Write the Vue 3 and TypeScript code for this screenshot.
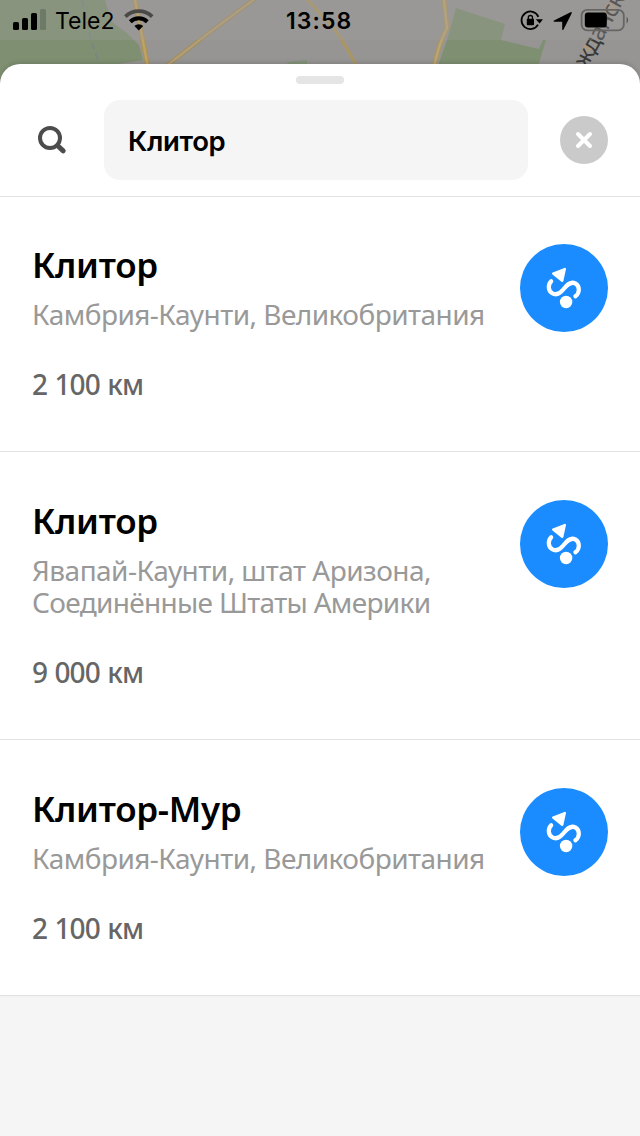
<script setup lang="ts">
import { ref } from 'vue'

interface Place {
  title: string
  address: string[]
  distance: string
}

const query = ref('Клитор')

const places: Place[] = [
  { title: 'Клитор', address: ['Камбрия-Каунти, Великобритания'], distance: '2 100 км' },
  { title: 'Клитор', address: ['Явапай-Каунти, штат Аризона,', 'Соединённые Штаты Америки'], distance: '9 000 км' },
  { title: 'Клитор-Мур', address: ['Камбрия-Каунти, Великобритания'], distance: '2 100 км' },
]
</script>

<template>
  <main class="screen">
    <svg class="map" width="640" height="90" viewBox="0 0 640 90">
      <rect width="640" height="90" fill="#969593" />
      <path d="M0 0H105L112 22L128 34L139 45L143 60L118 64L116 90H0Z" fill="#7f9072" />
      <path d="M456 8L505 24L501 40L539 49L543 40H546L538 66H438L447 40Z" fill="#7f9072" />
      <path d="M288 62L307 60V66H286Z" fill="#84957a" />
      <g fill="none">
        <path d="M82 0L91 40L101 68" stroke="#7c8581" stroke-width="2" stroke-dasharray="7 4" />
        <path d="M135 0L142 36L148 68" stroke="#aa935b" stroke-width="5" />
        <path d="M135 0L142 36L148 68" stroke="#bfa366" stroke-width="2.4" />
        <path d="M256 -2L210 32L165 67" stroke="#a28f62" stroke-width="4.5" />
        <path d="M256 -2L210 32L165 67" stroke="#b4a078" stroke-width="2" />
        <path d="M306 -2L335 30Q346 45 357 67" stroke="#aa9665" stroke-width="3.2" />
        <path d="M444 0L447 28Q439 43 434 67" stroke="#aa9665" stroke-width="5" />
        <path d="M444 0L447 28Q439 43 434 67" stroke="#baa475" stroke-width="2.4" />
      </g>
      <circle cx="587" cy="48" r="4" fill="#aa9780" />
      <circle cx="610" cy="8" r="5" fill="#aa9780" />
      <text class="street" transform="translate(586.5 69) rotate(-61)">жданск</text>
      <rect width="640" height="40" fill="#a1a09f" opacity=".3" />
    </svg>

    <header class="status">
      <svg class="signal" width="34" height="22" viewBox="0 0 34 22">
        <rect x="0" y="13" width="6" height="8" rx="1.5" />
        <rect x="9" y="9" width="6" height="12" rx="1.5" />
        <rect x="18" y="4" width="6" height="17" rx="1.5" />
        <rect x="27" y="0" width="6" height="21" rx="1.5" fill="#6e7a68" />
      </svg>
      <span class="carrier">Tele2</span>
      <svg class="wifi" width="30" height="22" viewBox="0 0 30 22" fill="none">
        <path d="M1.4 7.6A19.3 19.3 0 0 1 28.2 7.6" stroke="#4b4947" stroke-width="3.8" />
        <path d="M6.3 12.7A12.3 12.3 0 0 1 23.3 12.7" stroke="#000" stroke-width="4" />
        <path d="M10.4 17A6.2 6.2 0 0 1 19.2 17L14.8 21.6Z" fill="#000" />
      </svg>
      <time class="clock">13:58</time>
      <svg class="indicators" width="120" height="24" viewBox="0 0 120 24">
        <path d="M18.2 15.6A8.8 8.8 0 1 1 18.6 7.8" transform="translate(.8 0)" fill="none" stroke="#000" stroke-width="1.8" />
        <path d="M16.8 10.3H24L20.6 14.6Z" />
        <rect x="7.8" y="9.8" width="7.2" height="6.4" rx=".8" />
        <path d="M9.3 10.5V8.6a2.1 2.1 0 0 1 4.2 0v1.9" fill="none" stroke="#000" stroke-width="1.3" />
        <path d="M51.5 3.2Q53.3 2.5 52.6 4.4L44.5 20.4Q43.6 21.8 43.2 20.2V12.7H35.2Q33.6 12.3 35 11.4Z" />
        <rect x="62.6" y="0.9" width="42.2" height="20.4" rx="5.5" fill="none" stroke="#666563" stroke-width="1.8" />
        <rect x="65.8" y="3.6" width="22" height="15" rx="3" />
        <path d="M107.6 7.5Q110.6 11 107.6 14.8Z" fill="#555" />
      </svg>
    </header>

    <section class="sheet">
      <div class="search">
        <i class="grabber"></i>
        <svg class="lens" width="30" height="30" viewBox="0 0 30 30" fill="none" stroke="#4c4c4c">
          <circle cx="13" cy="13" r="10" stroke-width="4" />
          <path d="M20.5 20.5L26.2 25.8" stroke-width="5" stroke-linecap="round" />
        </svg>
        <div class="field"><span class="query">{{ query }}</span></div>
        <button class="clear" type="button" aria-label="Очистить">
          <svg width="48" height="48" viewBox="0 0 48 48">
            <path d="M18 18L30 30M30 18L18 30" stroke="#fff" stroke-width="4" stroke-linecap="round" />
          </svg>
        </button>
      </div>

      <article v-for="(place, i) in places" :key="i" class="place">
        <div class="info">
          <h2 class="title">{{ place.title }}</h2>
          <p class="address"><span v-for="line in place.address" :key="line" class="line">{{ line }}</span></p>
          <p class="distance">{{ place.distance }}</p>
        </div>
        <button class="route" type="button" aria-label="Маршрут">
          <svg width="88" height="88" viewBox="0 0 88 88">
            <path d="M31.2 37.2C27.6 41 28.2 46.8 32.2 49.2C36.5 51.8 40 49.5 43 45.8C46.8 41 50.5 36.9 55.3 39.4C60 42.2 60 48.9 55.4 52.3" fill="none" stroke="#fff" stroke-width="4.2" stroke-linecap="round" />
            <path d="M33.2 29.6L44.8 25.1L42.2 36.8Z" fill="#fff" stroke="#fff" stroke-width="2.4" stroke-linejoin="round" />
            <circle cx="46.1" cy="58" r="6.2" fill="#fff" />
          </svg>
        </button>
      </article>
    </section>
  </main>
</template>

<style>
body {
  margin: 0;
  background: #f5f5f5;
}
</style>

<style scoped>
.screen {
  position: relative;
  width: 640px;
  height: 1136px;
  overflow: hidden;
  background: #f5f5f5;
  font-family: "Noto Sans", "Open Sans", sans-serif;
}

.map {
  position: absolute;
  top: 0;
  left: 0;
}

.street {
  font: 400 23.5px "Noto Sans", sans-serif;
  letter-spacing: -0.6px;
  fill: #3a3937;
}

.status {
  position: relative;
  display: flex;
  height: 64px;
  box-sizing: border-box;
  padding: 9px 0 0 13px;
  font-family: Inter, sans-serif;
  color: #000;
}

.status > * {
  flex: none;
}

.carrier {
  width: 69px;
  margin-left: 8px;
  font-size: 23px;
  line-height: 24px;
}

.clock {
  width: 233px;
  margin-left: 132px;
  font-size: 23px;
  font-weight: 600;
  line-height: 24px;
  letter-spacing: 1.1px;
}

.sheet {
  position: relative;
  border-radius: 20px 20px 0 0;
  background: #fff;
  box-shadow: 0 -2px 4px rgba(0, 0, 0, 0.12);
}

.search {
  position: relative;
  display: flex;
  align-items: center;
  height: 133px;
  box-sizing: border-box;
  padding: 20px 32px 1px 37px;
  border-bottom: 1px solid #e2e2e2;
}

.grabber {
  position: absolute;
  top: 12px;
  left: 296px;
  width: 48px;
  height: 8px;
  border-radius: 4px;
  background: #e5e5e5;
}

.field {
  flex: 1;
  height: 80px;
  margin: 0 32px 0 37px;
  padding-left: 24px;
  box-sizing: border-box;
  border-radius: 16px;
  background: #f5f5f5;
}

.query {
  font: 600 27.5px/82px Inter, sans-serif;
  letter-spacing: -0.35px;
  color: #000;
}

button {
  flex: none;
  padding: 0;
  border: 0;
  border-radius: 50%;
}

button svg {
  display: block;
}

.clear {
  width: 48px;
  height: 48px;
  background: #cacaca;
}

.place {
  display: flex;
  justify-content: space-between;
  height: 207px;
  padding: 47px 32px 0;
  border-bottom: 1px solid #e2e2e2;
}

.place + .place {
  height: 239px;
  padding-top: 48px;
}

.place + .place + .place {
  height: 207px;
}

.title {
  margin: -1px 0 0;
  font-size: 35px;
  font-weight: 600;
  line-height: 44px;
  letter-spacing: -0.3px;
  color: #000;
}

.address {
  margin: 11px 0 0;
  font-size: 28px;
  line-height: 32px;
  letter-spacing: -0.53px;
  color: #999;
  white-space: nowrap;
}

.line {
  display: block;
}

.line + .line {
  letter-spacing: -0.68px;
}

.distance {
  margin: 38px 0 0;
  font-size: 28px;
  font-weight: 500;
  line-height: 32px;
  letter-spacing: -0.9px;
  word-spacing: 1px;
  color: #666;
}

.route {
  width: 88px;
  height: 88px;
  background: #1a8cff;
}
</style>
